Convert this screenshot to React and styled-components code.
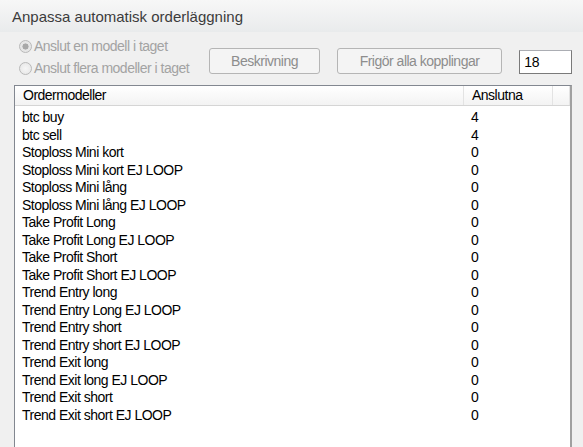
import React from 'react';
import styled, { createGlobalStyle } from 'styled-components';

const GlobalStyle = createGlobalStyle`
  body {
    margin: 0;
    background: #f0f0f0;
    font-family: "Liberation Sans", Arial, sans-serif;
  }
`;

const Window = styled.div`
  width: 583px;
  height: 447px;
  overflow: hidden;
  display: flex;
  flex-direction: column;
  background: #f0f0f0;
`;

const TitleBar = styled.div`
  height: 32px;
  flex-shrink: 0;
  display: flex;
  align-items: center;
  padding-left: 12px;
  font-size: 15px;
  color: #3c3c3c;
  background: linear-gradient(#f7f7f7, #e9ebec);
`;

const Content = styled.div`
  flex: 1;
  display: flex;
  flex-direction: column;
  padding: 4px 11px 0 14px;
`;

const Controls = styled.div`
  display: flex;
  align-items: flex-start;
  height: 49px;
`;

const RadioGroup = styled.div`
  display: flex;
  flex-direction: column;
  gap: 2px;
  padding-left: 5px;
  width: 191px;
`;

const RadioLabel = styled.label`
  display: flex;
  align-items: center;
  gap: 2px;
  height: 20px;
  font-size: 14px;
  letter-spacing: -0.5px;
  color: #a3a3a3;
`;

const RadioDot = styled.span`
  width: 11px;
  height: 11px;
  border-radius: 50%;
  border: 1px solid #b9b9b9;
  background: radial-gradient(circle, ${p => (p.$checked ? '#a8a8a8 0 2.8px, #e6e6e6 3.3px' : '#f6f6f6 0, #e4e4e4 100%')});
`;

const Button = styled.button`
  height: 26px;
  width: ${p => p.$width}px;
  margin-top: 12px;
  margin-right: 17px;
  border: 1px solid #b5b5b5;
  border-radius: 3px;
  background: #f4f4f4;
  color: #8d8d8d;
  font-family: inherit;
  font-size: 14px;
  letter-spacing: -0.5px;
  padding: 0;
`;

const NumberInput = styled.div`
  width: 47px;
  height: 22px;
  margin-top: 14px;
  border: 1px solid #7a7a7a;
  border-top-color: #abadb3;
  background: #fff;
  font-size: 14px;
  letter-spacing: -0.3px;
  line-height: 22px;
  padding-left: 4px;
`;

const ListBox = styled.div`
  flex: 1;
  border: 1px solid #828790;
  border-right: 2px solid #a0a0a0;
  border-bottom: none;
  background: #fff;
  font-size: 14px;
  letter-spacing: -0.5px;
`;

const Header = styled.div`
  display: flex;
  height: 19px;
  background: linear-gradient(#ffffff, #f3f3f3);
  border-bottom: 1px solid #d5d5d5;
`;

const HeaderCell = styled.div`
  width: ${p => p.$width}px;
  flex: ${p => (p.$width ? 'none' : 1)};
  padding-left: 8px;
  box-sizing: border-box;
  line-height: 19px;
  border-right: 1px solid #e3e3e3;
`;

const Rows = styled.div`
  padding-top: 3px;
`;

const Row = styled.div`
  display: flex;
  height: 17.5px;
  line-height: 17.5px;
`;

const NameCell = styled.div`
  width: 448px;
  box-sizing: border-box;
  padding-left: 7px;
`;

const ValueCell = styled.div`
  padding-left: 8px;
`;

const models = [
  ['btc buy', 4],
  ['btc sell', 4],
  ['Stoploss Mini kort', 0],
  ['Stoploss Mini kort EJ LOOP', 0],
  ['Stoploss Mini lång', 0],
  ['Stoploss Mini lång EJ LOOP', 0],
  ['Take Profit Long', 0],
  ['Take Profit Long EJ LOOP', 0],
  ['Take Profit Short', 0],
  ['Take Profit Short EJ LOOP', 0],
  ['Trend Entry long', 0],
  ['Trend Entry Long EJ LOOP', 0],
  ['Trend Entry short', 0],
  ['Trend Entry short EJ LOOP', 0],
  ['Trend Exit long', 0],
  ['Trend Exit long EJ LOOP', 0],
  ['Trend Exit short', 0],
  ['Trend Exit short EJ LOOP', 0],
];

const App = () => (
  <>
    <GlobalStyle />
    <Window>
      <TitleBar>Anpassa automatisk orderläggning</TitleBar>
      <Content>
        <Controls>
          <RadioGroup>
            <RadioLabel><RadioDot $checked />Anslut en modell i taget</RadioLabel>
            <RadioLabel><RadioDot />Anslut flera modeller i taget</RadioLabel>
          </RadioGroup>
          <Button $width={111}>Beskrivning</Button>
          <Button $width={166}>Frigör alla kopplingar</Button>
          <NumberInput>18</NumberInput>
        </Controls>
        <ListBox>
          <Header>
            <HeaderCell $width={449}>Ordermodeller</HeaderCell>
            <HeaderCell $width={89}>Anslutna</HeaderCell>
            <HeaderCell />
          </Header>
          <Rows>
            {models.map(([name, count]) => (
              <Row key={name}>
                <NameCell>{name}</NameCell>
                <ValueCell>{count}</ValueCell>
              </Row>
            ))}
          </Rows>
        </ListBox>
      </Content>
    </Window>
  </>
);

export default App;
